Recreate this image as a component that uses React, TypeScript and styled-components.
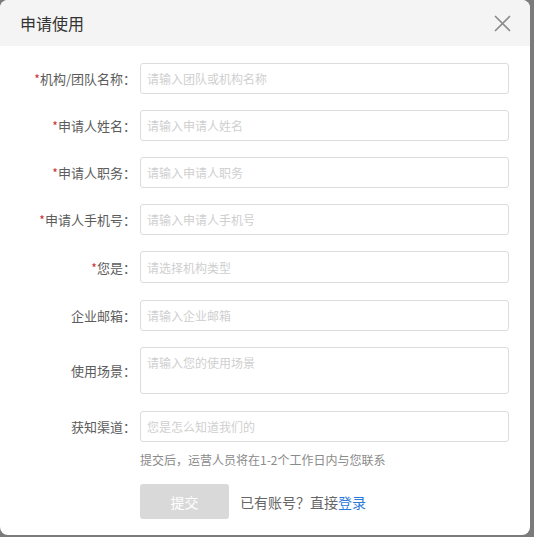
import React from "react";
import styled, { createGlobalStyle } from "styled-components";

const Global = createGlobalStyle`
  html, body { margin: 0; padding: 0; background: #7b7b7b; }
  body { font-family: "Microsoft YaHei", "Noto Sans CJK SC", "Noto Sans", sans-serif; }
  * { box-sizing: border-box; }
`;

const Dialog = styled.div`
  width: 530px; height: 535px; background: #fff; border-radius: 8px; overflow: hidden;
  display: flex; flex-direction: column;
`;
const Header = styled.div`
  height: 46px; background: #f4f4f4; display: flex; align-items: center;
  padding: 0 20px; justify-content: space-between;
`;
const Title = styled.div` font-size: 16px; color: #333; `;
const Close = styled.button`
  border: 0; background: none; padding: 0; width: 18px; height: 18px; cursor: pointer;
  display: flex; align-items: center; justify-content: center; margin-right: -1px;
`;
const Body = styled.form` padding: 17px 21px 0 0; display: flex; flex-direction: column; `;
const Row = styled.div<{ $gap?: number }>`
  display: grid; grid-template-columns: 131px 1fr; column-gap: 9px; align-items: center;
  margin-bottom: ${(p) => p.$gap ?? 16}px;
`;
const Label = styled.label`
  text-align: right; font-size: 13px; color: #5c5c5c; white-space: nowrap; margin-right: -5px;
`;
const Star = styled.span` color: #c9302c; font-size: 12px; `;
const Input = styled.input<{ $h?: number }>`
  height: ${(p) => p.$h ?? 31}px; border: 1px solid #dcdcdc; border-radius: 3px; padding: 0 6px;
  font-size: 12px; font-family: inherit; color: #333; outline: none; width: 100%;
  &::placeholder { color: #cfcfcf; }
`;
const Area = styled.textarea`
  height: 47px; border: 1px solid #dcdcdc; border-radius: 3px; padding: 6px 6px; resize: none;
  font-size: 12px; font-family: inherit; outline: none; width: 100%;
  &::placeholder { color: #cfcfcf; }
`;
const Hint = styled.div` margin-left: 140px; font-size: 12px; color: #8a8a8a; margin-top: -3px; `;
const Actions = styled.div` margin: 16px 0 0 140px; display: flex; align-items: center; gap: 11px; `;
const Submit = styled.button`
  width: 89px; height: 35px; border: 0; border-radius: 3px; background: #d9d9d9; color: #fff;
  font-size: 14px; font-family: inherit;
`;
const Login = styled.span` font-size: 14px; color: #666; a { color: #2b79d8; text-decoration: none; } `;

const fields = [
  { label: "机构/团队名称", ph: "请输入团队或机构名称", req: true },
  { label: "申请人姓名", ph: "请输入申请人姓名", req: true },
  { label: "申请人职务", ph: "请输入申请人职务", req: true },
  { label: "申请人手机号", ph: "请输入申请人手机号", req: true },
  { label: "您是", ph: "请选择机构类型", req: true, h: 32, gap: 17 },
  { label: "企业邮箱", ph: "请输入企业邮箱", req: false },
];

export default function App() {
  return (
    <>
      <Global />
      <Dialog>
        <Header>
          <Title>申请使用</Title>
          <Close aria-label="close">
            <svg width="17" height="17" viewBox="0 0 17 17">
              <path d="M1 1 L16 16 M16 1 L1 16" stroke="#8a8a8a" strokeWidth="1.6" />
            </svg>
          </Close>
        </Header>
        <Body onSubmit={(e) => e.preventDefault()}>
          {fields.map((f) => (
            <Row key={f.label} $gap={f.gap}>
              <Label>{f.req && <Star>*</Star>}{f.label}：</Label>
              <Input placeholder={f.ph} $h={f.h} />
            </Row>
          ))}
          <Row $gap={17}>
            <Label>使用场景：</Label>
            <Area placeholder="请输入您的使用场景" />
          </Row>
          <Row $gap={12}>
            <Label>获知渠道：</Label>
            <Input placeholder="您是怎么知道我们的" />
          </Row>
          <Hint>提交后，运营人员将在1-2个工作日内与您联系</Hint>
          <Actions>
            <Submit type="submit">提交</Submit>
            <Login>已有账号？直接<a href="#">登录</a></Login>
          </Actions>
        </Body>
      </Dialog>
    </>
  );
}
